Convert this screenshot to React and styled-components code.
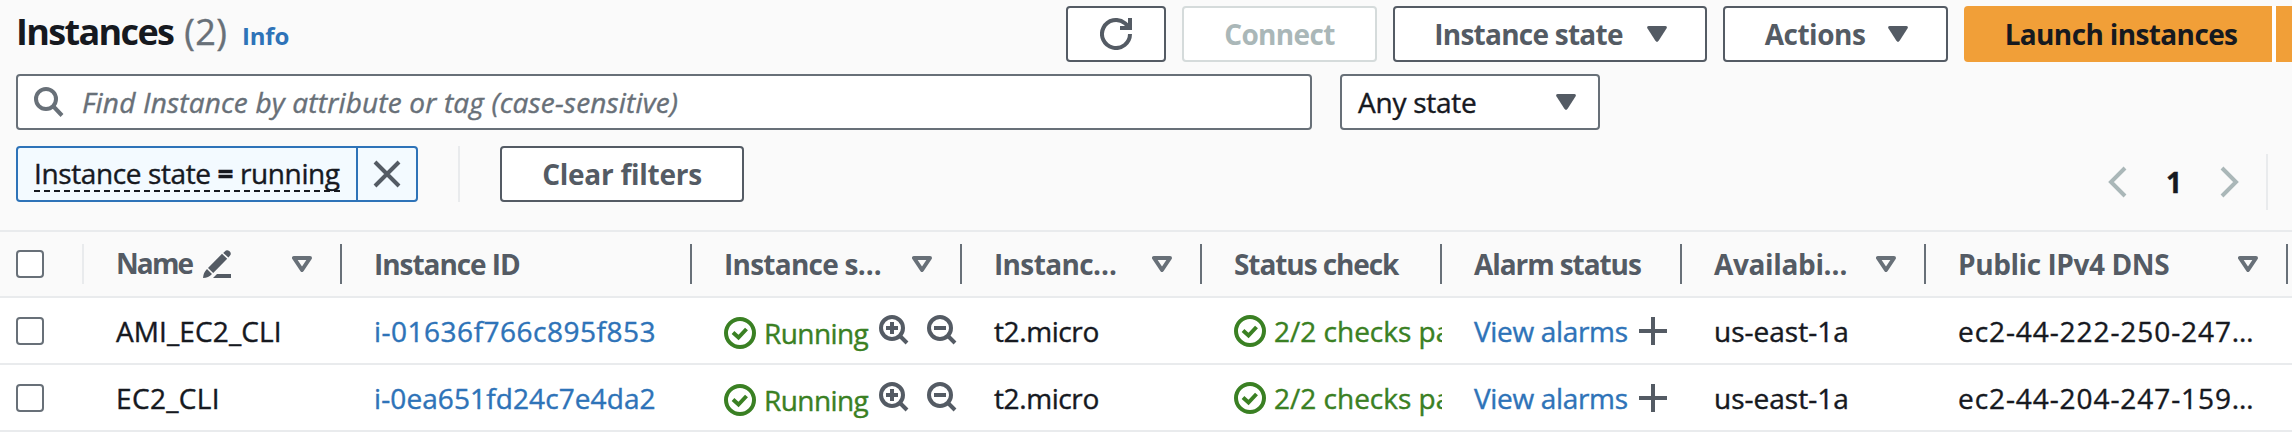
import React from 'react';
import styled, { createGlobalStyle } from 'styled-components';

const c = {
  ink: '#16191f',
  grey: '#545b64',
  mid: '#687078',
  soft: '#aab7b8',
  line: '#e9ebed',
  blue: '#2e73b8',
  green: '#3a8023',
  orange: '#f19f38',
};

const GlobalStyle = createGlobalStyle`
  *, *::before, *::after { box-sizing: border-box; }
  body {
    margin: 0;
    background: #fff;
    color: ${c.ink};
    font: 400 28px/36px "Open Sans", "Noto Sans", sans-serif;
    -webkit-text-stroke: 0.4px currentColor;
    overflow: hidden;
  }
  svg { display: block; flex: none; }
`;

const Page = styled.main`
  width: 2292px;
  height: 448px;
  overflow: hidden;
  background: #fff;
`;

const Header = styled.header`
  display: flex;
  flex-direction: column;
  height: 230px;
  padding: 6px 0 0 16px;
  background: #fafafa;
`;

const Toolbar = styled.div`
  display: flex;
  height: 56px;
`;

const Title = styled.h1`
  display: flex;
  align-items: baseline;
  flex: 1;
  margin: 0;
  font-size: 36px;
  line-height: 52px;
  font-weight: 700;
  letter-spacing: -1.65px;
  -webkit-text-stroke: 0;
`;

const Count = styled.span`
  margin-left: 11px;
  color: ${c.mid};
  font-weight: 400;
  letter-spacing: 0.3px;
  -webkit-text-stroke: 0.4px currentColor;
`;

const InfoLink = styled.a`
  margin-left: 15px;
  color: ${c.blue};
  font-size: 24px;
  letter-spacing: -0.2px;
`;

const Label = styled.span`
  letter-spacing: ${(p) => p.$track || 0}px;
  white-space: pre;
`;

const Actions = styled.div`
  display: flex;
  gap: 16px;
`;

const Button = styled.button`
  display: flex;
  align-items: center;
  justify-content: center;
  gap: ${(p) => p.$gap || 0}px;
  width: ${(p) => p.$width}px;
  height: 56px;
  padding: 0 0 1px ${(p) => p.$shift || 0}px;
  border: 2px solid ${(p) => (p.disabled ? '#d5dbdb' : c.grey)};
  border-radius: 4px;
  background: #fff;
  color: ${(p) => (p.disabled ? c.soft : c.grey)};
  font: inherit;
  font-weight: 700;
  -webkit-text-stroke: 0;
`;

const LaunchGroup = styled.div`
  display: flex;
  gap: 4px;
  width: 328px;
  overflow: hidden;
  background: linear-gradient(#fff, #fff) 300px 0 / 20px 100% no-repeat;
`;

const LaunchButton = styled(Button)`
  flex: none;
  border: 0;
  border-radius: 4px 0 0 4px;
  background: ${c.orange};
  color: ${c.ink};
`;

const LaunchMore = styled(LaunchButton)`
  border-radius: 0;
`;

const SearchRow = styled.div`
  display: flex;
  gap: 28px;
  margin-top: 12px;
`;

const SearchBox = styled.div`
  display: flex;
  align-items: center;
  gap: 18px;
  width: 1296px;
  height: 56px;
  padding-left: 16px;
  border: 2px solid ${c.mid};
  border-radius: 4px;
  background: #fff;
  color: ${c.mid};
  font-style: italic;
`;

const Select = styled.div`
  display: flex;
  align-items: center;
  justify-content: space-between;
  width: 260px;
  height: 56px;
  padding: 0 22px 0 16px;
  border: 2px solid ${c.mid};
  border-radius: 4px;
  background: #fff;
`;

const FilterRow = styled.div`
  display: flex;
  margin-top: 16px;
`;

const Token = styled.div`
  display: flex;
  width: 402px;
  height: 56px;
  border: 2px solid ${c.blue};
  border-radius: 4px;
  background: #f3faff;
`;

const TokenText = styled.div`
  width: 340px;
  padding: 7px 0 0 16px;
  border-right: 2px solid ${c.blue};
`;

const TokenValue = styled.div`
  width: 306px;
  height: 37px;
  border-bottom: 2px dashed ${c.ink};
  line-height: 36px;
  letter-spacing: -0.39px;
  white-space: pre;
`;

const TokenClose = styled.div`
  display: flex;
  flex: 1;
  align-items: center;
  justify-content: center;
`;

const Divider = styled.div`
  width: 2px;
  height: ${(p) => p.$height || 56}px;
  background: ${(p) => (p.$strong ? c.mid : c.line)};
`;

const FilterDivider = styled(Divider)`
  margin: 0 40px;
`;

const Pager = styled.nav`
  display: flex;
  align-items: center;
  height: 56px;
  margin: 8px 24px 0 auto;
  color: ${c.soft};
`;

const PageNumber = styled.span`
  width: 93px;
  padding-left: 1px;
  color: ${c.ink};
  font-weight: 700;
  text-align: center;
`;

const PagerDivider = styled(Divider)`
  margin-left: 26px;
`;

const Row = styled.div`
  display: grid;
  grid-template-columns: 84px 258px 350px 270px 240px 240px 240px 244px 362px 1fr;
  height: 67px;
  border-bottom: 2px solid ${c.line};
`;

const HeadRow = styled(Row)`
  height: 68px;
  border-top: 2px solid ${c.line};
  background: #fafafa;
  color: ${c.grey};
  font-weight: 700;
  -webkit-text-stroke: 0;
`;

const Cell = styled.div`
  display: flex;
  align-items: center;
  min-width: 0;
  padding-left: 32px;
  overflow: hidden;
  white-space: nowrap;
`;

const CheckboxCell = styled(Cell)`
  padding-left: 16px;
`;

const HeadContent = styled.div`
  display: flex;
  flex: 1;
  align-items: center;
  justify-content: space-between;
  padding-right: 28px;
`;

const HeadEdge = styled(Divider)`
  margin-left: auto;
`;

const NameHead = styled.div`
  display: flex;
  align-items: center;
  gap: 11px;
`;

const NameLabel = styled(Label)`
  margin-top: -3px;
`;

const Checkbox = styled.span`
  width: 28px;
  height: 28px;
  border: 2px solid ${c.mid};
  border-radius: 4px;
  background: #fff;
`;

const Link = styled.a`
  color: ${c.blue};
`;

const AlarmCell = styled(Cell)`
  gap: 11px;
`;

const Status = styled.span`
  display: flex;
  align-items: center;
  gap: 8px;
  color: ${c.green};
`;

const RunningStatus = styled(Status)`
  padding-top: 4px;
`;

const ZoomTools = styled.span`
  display: flex;
  gap: 18px;
  margin: -2px 0 0 11px;
`;

const CaretIcon = () => (
  <svg width="20" height="16" viewBox="0 0 20 16" fill={c.grey}>
    <path d="M1.8 0h16.4q2 0 1.6 2L11.6 14.8q-1.6 2.2-3.2 0L.2 2Q-.2 0 1.8 0z" />
  </svg>
);

const SortIcon = () => (
  <svg width="20" height="16" viewBox="0 0 20 16" fill="none" stroke={c.mid} strokeWidth="4" strokeLinejoin="round">
    <path d="M2 2h16l-8 12z" />
  </svg>
);

const RefreshIcon = () => (
  <svg width="32" height="32" viewBox="0 0 32 32" fill="none" stroke={c.grey} strokeWidth="4">
    <path d="M30 16a14 14 0 1 1-5-10.7L29 9" />
    <path d="M30 0v10H20" />
  </svg>
);

const SearchIcon = () => (
  <svg width="30" height="30" viewBox="0 0 30 30" fill="none" stroke={c.mid} strokeWidth="4">
    <circle cx="12" cy="12" r="10" />
    <path d="M19 19l9 9.5" />
  </svg>
);

const CloseIcon = () => (
  <svg width="28" height="28" viewBox="0 0 28 28" fill="none" stroke={c.grey} strokeWidth="4">
    <path d="M2 2l24 24M26 2L2 26" />
  </svg>
);

const ChevronIcon = ({ right }) => (
  <svg width="20" height="32" viewBox="0 0 20 32" fill="none" stroke={c.soft} strokeWidth="4">
    <path d={right ? 'M2 2l14 14L2 30' : 'M18 2L4 16l14 14'} />
  </svg>
);

const PencilIcon = () => (
  <svg width="28" height="28" viewBox="0 0 28 28" fill={c.grey}>
    <path d="M19 3.8l5.2 5L10.2 23 5 18zM21.8 1.4q2-2.3 4.5-.4 2.7 2.4.6 4.7l-1.5 1.7-5.2-4.5zM4 19l5 5Q5.5 28 0 28q.3-5.5 4-9zM10 28l4-4h14v4z" />
  </svg>
);

const CheckIcon = () => (
  <svg width="32" height="32" viewBox="0 0 32 32" fill="none" stroke={c.green} strokeWidth="4">
    <circle cx="16" cy="16" r="14" />
    <path d="M9 15.5l5.5 5L22.5 12" />
  </svg>
);

const ZoomIcon = ({ plus }) => (
  <svg width="30" height="30" viewBox="0 0 30 30" fill="none" stroke={c.grey} strokeWidth="4">
    <circle cx="13" cy="13" r="11" />
    <path d="M20.5 20.5l7.5 7.5M7 13h12" />
    {plus && <path d="M13 7v12" />}
  </svg>
);

const PlusIcon = () => (
  <svg width="28" height="28" viewBox="0 0 28 28" fill="none" stroke={c.grey} strokeWidth="4">
    <path d="M14 0v28M0 14h28" />
  </svg>
);

const columns = [
  { label: 'Instance ID', track: -1.05 },
  { label: 'Instance s…', track: -0.75, sort: true },
  { label: 'Instanc…', track: -0.65, sort: true },
  { label: 'Status check', track: -1.08 },
  { label: 'Alarm status', track: -1.08 },
  { label: 'Availabi…', track: -0.35, sort: true },
  { label: 'Public IPv4 DNS', track: -0.42, sort: true },
];

const instances = [
  { name: 'AMI_EC2_CLI', nameTrack: 0.1, id: 'i-01636f766c895f853', idTrack: 0.5, dns: 'ec2-44-222-250-247…' },
  { name: 'EC2_CLI', nameTrack: 0.35, id: 'i-0ea651fd24c7e4da2', idTrack: 0.1, dns: 'ec2-44-204-247-159…' },
];

const InstanceRow = ({ item }) => (
  <Row>
    <CheckboxCell><Checkbox /></CheckboxCell>
    <Cell><Label $track={item.nameTrack}>{item.name}</Label></Cell>
    <Cell><Link><Label $track={item.idTrack}>{item.id}</Label></Link></Cell>
    <Cell>
      <RunningStatus><CheckIcon /><Label $track={-0.58}>Running</Label></RunningStatus>
      <ZoomTools><ZoomIcon plus /><ZoomIcon /></ZoomTools>
    </Cell>
    <Cell><Label $track={-0.4}>t2.micro</Label></Cell>
    <Cell><Status><CheckIcon /><Label>2/2 checks pa</Label></Status></Cell>
    <AlarmCell>
      <Link><Label $track={-0.33}>View alarms</Label></Link>
      <PlusIcon />
    </AlarmCell>
    <Cell><Label>us-east-1a</Label></Cell>
    <Cell><Label $track={0.92}>{item.dns}</Label></Cell>
  </Row>
);

export default function App() {
  return (
    <Page>
      <GlobalStyle />
      <Header>
        <Toolbar>
          <Title>Instances<Count>(2)</Count><InfoLink>Info</InfoLink></Title>
          <Actions>
            <Button $width={100}><RefreshIcon /></Button>
            <Button $width={195} disabled><Label $track={-0.65}>Connect</Label></Button>
            <Button $width={314} $gap={24} $shift={1}><Label $track={-0.75}>Instance state</Label><CaretIcon /></Button>
            <Button $width={225} $gap={23} $shift={2}><Label $track={-0.48}>Actions</Label><CaretIcon /></Button>
            <LaunchGroup>
              <LaunchButton $width={308} $shift={6}><Label $track={-0.63}>Launch instances</Label></LaunchButton>
              <LaunchMore $width={60} aria-label="More launch options" />
            </LaunchGroup>
          </Actions>
        </Toolbar>
        <SearchRow>
          <SearchBox>
            <SearchIcon />
            <Label $track={0.18}>Find Instance by attribute or tag (case-sensitive)</Label>
          </SearchBox>
          <Select><Label $track={-0.25}>Any state</Label><CaretIcon /></Select>
        </SearchRow>
        <FilterRow>
          <Token>
            <TokenText><TokenValue>Instance state <b>=</b> running</TokenValue></TokenText>
            <TokenClose><CloseIcon /></TokenClose>
          </Token>
          <FilterDivider />
          <Button $width={244}><Label $track={-0.27}>Clear filters</Label></Button>
          <Pager>
            <ChevronIcon />
            <PageNumber>1</PageNumber>
            <ChevronIcon right />
            <PagerDivider />
          </Pager>
        </FilterRow>
      </Header>
      <HeadRow>
        <CheckboxCell><Checkbox /><HeadEdge $height={40} /></CheckboxCell>
        <Cell>
          <HeadContent>
            <NameHead><NameLabel $track={-1.9}>Name</NameLabel><PencilIcon /></NameHead>
            <SortIcon />
          </HeadContent>
          <Divider $height={40} $strong />
        </Cell>
        {columns.map((col) => (
          <Cell key={col.label}>
            <HeadContent>
              <Label $track={col.track}>{col.label}</Label>
              {col.sort && <SortIcon />}
            </HeadContent>
            <Divider $height={40} $strong />
          </Cell>
        ))}
      </HeadRow>
      {instances.map((item) => <InstanceRow key={item.id} item={item} />)}
    </Page>
  );
}
